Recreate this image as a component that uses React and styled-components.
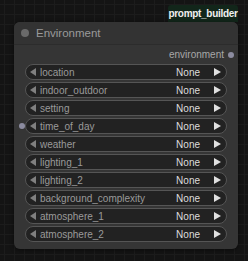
import React from 'react'
import styled, { createGlobalStyle } from 'styled-components'

const GlobalStyle = createGlobalStyle`
  html, body {
    margin: 0;
    padding: 0;
    background: #141414;
  }
  body {
    font-family: Arial, "Liberation Sans", sans-serif;
  }
`

const inputs = [
  'location',
  'indoor_outdoor',
  'setting',
  'time_of_day',
  'weather',
  'lighting_1',
  'lighting_2',
  'background_complexity',
  'atmosphere_1',
  'atmosphere_2',
]

const App = () => {
  return (
    <Canvas>
      <GlobalStyle />
      <GroupBadge>prompt_builder</GroupBadge>
      <Node>
        <TitleBar>
          <TitleDot />
          <TitleText>Environment</TitleText>
        </TitleBar>
        <Body>
          <OutputRow>
            <OutputLabel>environment</OutputLabel>
            <Slot $side="right" />
          </OutputRow>
          {inputs.map((name) => (
            <Widget key={name}>
              {name === 'time_of_day' && <Slot $side="left" />}
              <Arrow />
              <WidgetLabel>{name}</WidgetLabel>
              <WidgetValue>None</WidgetValue>
              <Arrow $right />
            </Widget>
          ))}
        </Body>
      </Node>
    </Canvas>
  )
}

const Canvas = styled.div`
  position: relative;
  width: 248px;
  height: 261px;
  overflow: hidden;
  background-color: #141414;
  background-image:
    linear-gradient(#1c1c1c 1px, transparent 1px),
    linear-gradient(90deg, #1c1c1c 1px, transparent 1px);
  background-size: 10px 10px;
  background-position: 4px 4px;
`

const GroupBadge = styled.div`
  position: absolute;
  left: 168px;
  top: 5px;
  width: 70px;
  height: 17px;
  display: flex;
  align-items: center;
  justify-content: center;
  background: #12261a;
  border-radius: 3px 3px 0 0;
  color: #f0f0f0;
  font-size: 10px;
  font-weight: bold;
  letter-spacing: -0.3px;
  white-space: nowrap;
`

const Node = styled.div`
  position: absolute;
  left: 14px;
  top: 22px;
  width: 224px;
  height: 227px;
  background: #353535;
  border-radius: 6px;
  box-shadow: 0 1px 4px rgba(0, 0, 0, 0.5);
`

const TitleBar = styled.div`
  height: 22px;
  display: flex;
  align-items: center;
  gap: 7px;
  padding-left: 7px;
  background: #333333;
  border-radius: 6px 6px 0 0;
  border-bottom: 1px solid #2c2c2c;
`

const TitleDot = styled.span`
  width: 8px;
  height: 8px;
  border-radius: 50%;
  background: #6a6a6a;
`

const TitleText = styled.span`
  color: #9a9a9a;
  font-size: 11.5px;
`

const Body = styled.div`
  display: flex;
  flex-direction: column;
  gap: 2px;
  padding: 2px 11px 0 11px;
`

const OutputRow = styled.div`
  position: relative;
  height: 15px;
  display: flex;
  align-items: center;
  justify-content: flex-end;
  padding-right: 3px;
`

const OutputLabel = styled.span`
  color: #a8a8a8;
  font-size: 10px;
`

const Slot = styled.span`
  position: absolute;
  top: 50%;
  width: 6px;
  height: 6px;
  margin-top: -3px;
  border-radius: 50%;
  background: #8c8ca0;
  ${({ $side }) => ($side === 'right' ? 'right: -7px;' : 'left: -7px;')}
`

const Widget = styled.div`
  position: relative;
  height: 16px;
  box-sizing: border-box;
  display: flex;
  align-items: center;
  padding: 0 5px 0 4px;
  background: #222222;
  border: 1px solid #555555;
  border-radius: 8px;
  font-size: 10px;
`

const Arrow = styled.span`
  width: 0;
  height: 0;
  border-top: 4px solid transparent;
  border-bottom: 4px solid transparent;
  ${({ $right }) =>
    $right
      ? 'border-left: 7px solid #e0e0e0; margin-left: 14px;'
      : 'border-right: 6px solid #808080; margin-right: 4px;'}
`

const WidgetLabel = styled.span`
  flex: 1;
  color: #9a9a9a;
`

const WidgetValue = styled.span`
  color: #dddddd;
`

export default App
